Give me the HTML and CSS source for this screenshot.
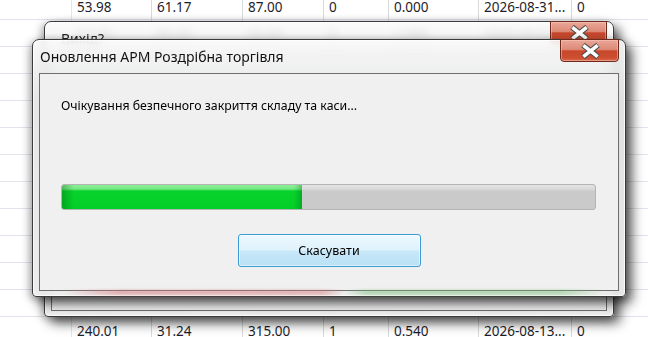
FILE: index.html
```html
<!DOCTYPE html>
<html>
<head>
    <meta charset="utf-8">
    <title>Оновлення АРМ Роздрібна торгівля</title>
    <link rel="stylesheet" href="styles.css">
</head>
<body>
    <div class="desk">
        <table class="grid">
            <colgroup>
                <col style="width:71px"><col style="width:80px"><col style="width:91px"><col style="width:81px">
                <col style="width:65px"><col style="width:90px"><col style="width:93px"><col style="width:129px">
            </colgroup>
            <tr><td></td><td>53.98</td><td>61.17</td><td>87.00</td><td>0</td><td>0.000</td><td>2026-08-31...</td><td>0</td></tr>
            <tr><td></td><td>57.55</td><td>65.20</td><td>92.00</td><td>0</td><td>1.000</td><td>2026-09-02...</td><td>0</td></tr>
            <tr><td></td><td>12.40</td><td>14.05</td><td>20.00</td><td>2</td><td>0.250</td><td>2026-08-20...</td><td>0</td></tr>
            <tr><td></td><td>88.10</td><td>99.80</td><td>141.00</td><td>0</td><td>0.000</td><td>2026-08-27...</td><td>0</td></tr>
            <tr><td></td><td>33.70</td><td>38.16</td><td>54.00</td><td>1</td><td>0.500</td><td>2026-08-19...</td><td>0</td></tr>
            <tr><td></td><td>19.99</td><td>22.64</td><td>32.00</td><td>0</td><td>0.000</td><td>2026-09-05...</td><td>0</td></tr>
            <tr><td></td><td>71.25</td><td>80.71</td><td>114.00</td><td>0</td><td>0.120</td><td>2026-08-24...</td><td>0</td></tr>
            <tr><td></td><td>45.00</td><td>50.97</td><td>72.00</td><td>3</td><td>0.000</td><td>2026-08-30...</td><td>0</td></tr>
            <tr><td></td><td>9.80</td><td>11.10</td><td>15.70</td><td>0</td><td>0.000</td><td>2026-08-15...</td><td>0</td></tr>
            <tr><td></td><td>126.30</td><td>143.06</td><td>202.00</td><td>0</td><td>0.300</td><td>2026-08-22...</td><td>0</td></tr>
            <tr><td></td><td>64.40</td><td>72.94</td><td>103.00</td><td>1</td><td>0.000</td><td>2026-08-17...</td><td>0</td></tr>
            <tr><td></td><td>27.10</td><td>30.69</td><td>43.00</td><td>0</td><td>0.000</td><td>2026-08-14...</td><td>0</td></tr>
            <tr><td></td><td>240.01</td><td>31.24</td><td>315.00</td><td>1</td><td>0.540</td><td>2026-08-13...</td><td>0</td></tr>
        </table>

        <!-- dialog behind -->
        <div class="win win-back">
            <div class="titlebar">
                <span class="title">Вихід?</span>
                <button class="close" aria-label="Закрити">
                    <svg width="21" height="16" viewBox="0 0 21 16"><path d="M3 2 L18 14 M18 2 L3 14" stroke="#4b4b4b" stroke-width="5.6"/><path d="M3.4 2.4 L17.6 13.6 M17.6 2.4 L3.4 13.6" stroke="#fff" stroke-width="3.6"/></svg>
                </button>
            </div>
            <div class="client"></div>
        </div>

        <!-- update dialog -->
        <div class="win win-front">
            <div class="titlebar">
                <span class="title">Оновлення АРМ Роздрібна торгівля</span>
                <button class="close" aria-label="Закрити">
                    <svg width="21" height="16" viewBox="0 0 21 16"><path d="M3 2 L18 14 M18 2 L3 14" stroke="#4b4b4b" stroke-width="5.6"/><path d="M3.4 2.4 L17.6 13.6 M17.6 2.4 L3.4 13.6" stroke="#fff" stroke-width="3.6"/></svg>
                </button>
            </div>
            <div class="client">
                <p class="msg">Очікування безпечного закриття складу та каси...</p>
                <div class="progress"><div class="fill" style="width:45%"></div></div>
                <div class="actions"><button class="btn">Скасувати</button></div>
            </div>
        </div>
    </div>
</body>
</html>
```

FILE: styles.css
```css
* {
    box-sizing: border-box;
}
body {
    margin: 0;
    background: #fff;
    font-family: "Noto Sans", "Open Sans", sans-serif;
    color: #000;
}
.desk {
    position: relative;
    width: 648px;
    height: 337px;
    overflow: hidden;
}

/* table in the background */
.grid {
    border-collapse: separate;
    border-spacing: 0;
    table-layout: fixed;
    width: 700px;
    margin-top: -7px;
    font-size: 13.5px;
    color: #1d1d2b;
}
.grid td {
    height: 27px;
    padding: 2px 5px 0;
    border-bottom: 1px solid #e1e5eb;
    border-left: 1px solid #d8dadd;
    white-space: nowrap;
    overflow: hidden;
}
.grid td:first-child {
    border-left: 0;
}
.grid td:nth-child(2) {
    border-left-color: #e4e6ea;
}

/* windows */
.win {
    position: absolute;
    display: flex;
    flex-direction: column;
    padding: 0 6px 5px;
    border: 1px solid #3b3b3b;
    border-radius: 7px 7px 4px 4px;
    background: linear-gradient(rgba(250, 250, 250, 0.84), rgba(228, 229, 231, 0.9) 60px, rgba(236, 236, 236, 0.9));
    backdrop-filter: blur(4px);
    box-shadow: inset 0 0 0 1px rgba(255, 255, 255, 0.75), 6px 6px 12px rgba(0, 0, 0, 0.65), -3px 2px 9px rgba(0, 0, 0, 0.28);
}
.win-back {
    left: 44px;
    top: 21px;
    width: 570px;
    height: 296px;
}
.win-front {
    left: 32px;
    top: 39px;
    width: 594px;
    height: 258px;
}
.win-front::after {
    content: "";
    position: absolute;
    left: 30px;
    right: 20px;
    bottom: 1px;
    height: 5px;
    background: linear-gradient(90deg, transparent, rgba(214, 120, 124, 0.55) 10%, rgba(214, 120, 124, 0.5) 48%, transparent 52%, rgba(120, 190, 120, 0.5) 56%, rgba(120, 190, 120, 0.5) 92%, transparent);
    filter: blur(1.5px);
}
.titlebar {
    height: 33px;
    display: flex;
    align-items: center;
    padding-left: 1px;
}
.title {
    font-size: 14px;
    color: #111;
}
.win-back .titlebar {
    align-items: flex-start;
    padding: 7px 0 0 10px;
}
.win-back .title {
    color: #222;
}
.close {
    position: absolute;
    top: -1px;
    right: 6px;
    width: 59px;
    height: 23px;
    padding: 0;
    display: flex;
    align-items: center;
    justify-content: center;
    border: 1px solid #6e2a1d;
    border-radius: 0 0 4px 4px;
    background: linear-gradient(#eba798, #dc8a77 45%, #c8472c 52%, #cc4f31 85%, #dd6a4c);
    box-shadow: inset 0 0 0 1px rgba(255, 210, 200, 0.45);
}
.close svg {
    margin-left: 2px;
}
.win-back .close {
    width: 57px;
}
.client {
    flex: 1;
    border: 1px solid #6f6f6f;
    background: #f0f0f0;
    padding: 23px 21px 0 21px;
}
.msg {
    margin: 0;
    font-size: 12.3px;
    line-height: 18px;
}
.progress {
    margin: 69px 1px 0 0;
    height: 26px;
    border: 1px solid #b4b4b4;
    border-radius: 3px;
    background: linear-gradient(#e3e3e3, #dadada 4px, #cbcbcb 6px, #c9c9c9);
    overflow: hidden;
}
.fill {
    height: 100%;
    background:
        linear-gradient(90deg, rgba(0, 90, 20, 0.35), transparent 12px, transparent calc(100% - 8px), rgba(0, 90, 20, 0.3)),
        linear-gradient(#8cef96, #77e985 4px, #07d22b 6px, #02cf27);
}
.actions {
    display: flex;
    justify-content: center;
    margin-top: 24px;
}
.btn {
    width: 183px;
    height: 33px;
    border: 1px solid #3c9ad8;
    border-radius: 3px;
    background: linear-gradient(#eef8fe, #dff2fc 48%, #c8e8f9 52%, #b9e0f5);
    box-shadow: inset 0 0 0 1px rgba(255, 255, 255, 0.55);
    font-family: "Noto Sans", "Open Sans", sans-serif;
    font-size: 12.5px;
    color: #000;
}
```
